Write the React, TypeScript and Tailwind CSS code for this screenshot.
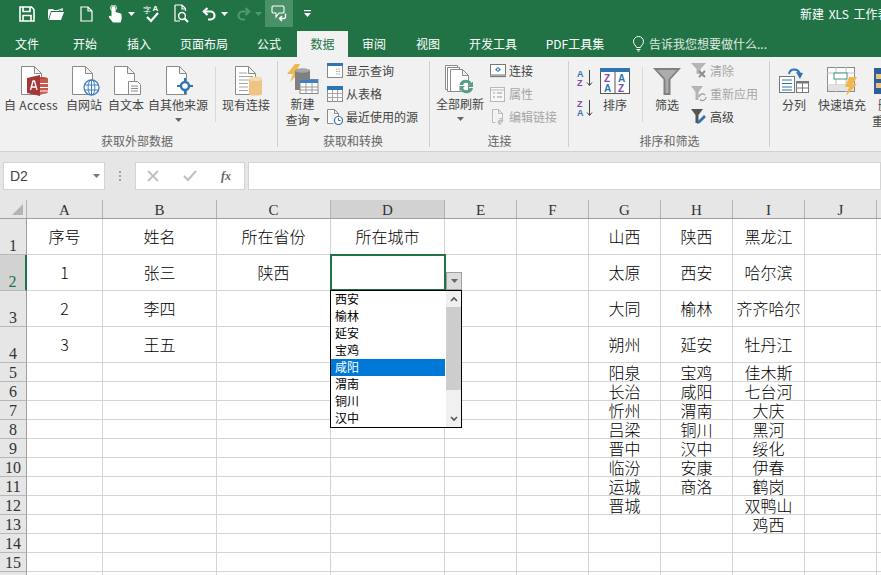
import React from "react";

const cols = ["A","B","C","D","E","F","G","H","I","J",""];
const rows: string[][] = [
  ["序号","姓名","所在省份","所在城市","","","山西","陕西","黑龙江","",""],
  ["1","张三","陕西","","","","太原","西安","哈尔滨","",""],
  ["2","李四","","","","","大同","榆林","齐齐哈尔","",""],
  ["3","王五","","","","","朔州","延安","牡丹江","",""],
  ["","","","","","","阳泉","宝鸡","佳木斯","",""],
  ["","","","","","","长治","咸阳","七台河","",""],
  ["","","","","","","忻州","渭南","大庆","",""],
  ["","","","","","","吕梁","铜川","黑河","",""],
  ["","","","","","","晋中","汉中","绥化","",""],
  ["","","","","","","临汾","安康","伊春","",""],
  ["","","","","","","运城","商洛","鹤岗","",""],
  ["","","","","","","晋城","","双鸭山","",""],
  ["","","","","","","","","鸡西","",""],
  ["","","","","","","","","","",""],
  ["","","","","","","","","","",""],
  ["","","","","","","","","","",""],
];
const colW = ["w-[76px]","w-[114px]","w-[114px]","w-[114px]","w-[72px]","w-[72px]","w-[72px]","w-[72px]","w-[72px]","w-[72px]","w-[5px]"];
const cities = ["西安","榆林","延安","宝鸡","咸阳","渭南","铜川","汉中"];

const Doc = () => (
  <path d="M.5 1.5h13l7 7v21H.5z M13.5 1.5v7h7" fill="#fff" stroke="#8a8a8a" strokeWidth="1" />
);

const QSave = () => (
  <svg width="16" height="16" viewBox="0 0 16 16" fill="none" stroke="#fff" strokeWidth="1.6"><path d="M1 1h11.5L15 3.5V15H1z"/><path d="M4 1v4.5h7V1" /><path d="M4 15V9.5h8V15" /></svg>
);
const QFolder = () => (
  <svg width="18" height="14" viewBox="0 0 18 14" fill="#fff"><path d="M1 13V3l1-1h4l1 1h5v1H4L1 13z"/><path d="M4.5 5H17l-3 8H2z" /><path d="M10 3l6-2v3z" opacity=".8"/></svg>
);
const QNew = () => (
  <svg width="13" height="16" viewBox="0 0 13 16" fill="none" stroke="#fff" strokeWidth="1.2"><path d="M1 1h7l4 4v10H1zM8 1v4h4" /></svg>
);
const QTouch = () => (
  <svg width="14" height="18" viewBox="0 0 14 18" fill="#fff"><path d="M3.5 3a2 2 0 0 1 4 0v4l4.5 1.3c1 .3 1.6 1 1.6 2V14l-1 3.5H5L1 12.5c-.6-.9.3-2.2 1.4-1.7l1.1.7z" /><circle cx="5.5" cy="3" r="3" fill="none" stroke="#fff" strokeWidth=".8"/></svg>
);
const Caret = ({ c = "#fff" }: { c?: string }) => (
  <svg width="7" height="4" viewBox="0 0 7 4" fill={c}><path d="M0 0h7L3.5 4z" /></svg>
);
const QSpell = () => (
  <svg width="18" height="19" viewBox="0 0 18 19" fill="none" stroke="#fff"><text x="0" y="9" fontSize="8" fill="#fff" stroke="none" fontFamily="Noto Sans CJK SC">字</text><text x="9.5" y="7" fontSize="8" fill="#fff" stroke="none" fontFamily="Liberation Sans" fontWeight="700">A</text><path d="M4 13l4 4 7-8" strokeWidth="2.2" /></svg>
);
const QPreview = () => (
  <svg width="15" height="19" viewBox="0 0 15 19" fill="none" stroke="#fff" strokeWidth="1.2"><path d="M1 1h7l3.5 3.5V7M1 1v16h5M8 1v4h3.5" /><circle cx="8" cy="12" r="3.4" strokeWidth="1.5"/><path d="M10.5 14.5L14 18" strokeWidth="2" /></svg>
);
const QUndo = ({ c = "#fff", flip = false }: { c?: string; flip?: boolean }) => (
  <svg width="15" height="14" viewBox="0 0 15 14" fill="none" stroke={c} strokeWidth="2.2" className={flip ? "-scale-x-100" : ""}><path d="M5.5 1L1.8 4.5 5.5 8" /><path d="M2 4.5h6.5a4 4 0 0 1 0 8H6" /></svg>
);
const QComment = () => (
  <svg width="16" height="17" viewBox="0 0 16 17" fill="none" stroke="#fff" strokeWidth="1.1"><path d="M2 1h10l1 1v5l-1 1H8L5 12V8H2L1 7V2z" /><path d="M14.5 8.5v3.5a1.5 1.5 0 0 1-1.5 1.5H8.5M11 11l-2.5 2.5L11 16" strokeWidth="1.4" /></svg>
);
const QMore = () => (
  <svg width="7" height="7" viewBox="0 0 7 7" fill="#fff"><path d="M0 0h7v1.2H0zM0 3h7L3.5 7z" /></svg>
);

const AccessIcon = () => (
  <svg width="32" height="32" viewBox="0 0 32 32" className="overflow-visible"><g transform="translate(6 0)"><Doc />
    <ellipse cx="21" cy="14" rx="6" ry="2" fill="#b7472a" /><path d="M15 14h12v13c0 1.2-2.5 2-6 2s-6-.8-6-2z" fill="#c75b4a" /><path d="M17 18.5h10M17 22.5h10M17 26h10" stroke="#fff" strokeWidth="1.2"/>
    <path d="M6 13l13-3v21L6 28z" fill="#a4373a" /><path d="M9.5 25l2.5-9h1.5l2.5 9M10.6 22h4.3" stroke="#fff" strokeWidth="1.3" fill="none" />
  </g></svg>
);
const WebIcon = () => (
  <svg width="32" height="32" viewBox="0 0 32 32" className="overflow-visible"><g transform="translate(4 0)"><Doc />
    <circle cx="19.5" cy="22.5" r="7.5" fill="#fff" stroke="#3f7fbf" strokeWidth="1.3"/><ellipse cx="19.5" cy="22.5" rx="3.4" ry="7.5" fill="none" stroke="#3f7fbf"/><path d="M19.5 15v15M12.5 20h14M12.5 25h14" stroke="#3f7fbf" fill="none"/>
  </g></svg>
);
const TextIcon = () => (
  <svg width="32" height="32" viewBox="0 0 32 32" className="overflow-visible"><g transform="translate(4 0)"><Doc />
    <path d="M14.5 16.5h9l3 3v10h-12z" fill="#fff" stroke="#8a8a8a"/><path d="M17 21h7M17 23.5h7M17 26h7" stroke="#8a8a8a" />
  </g></svg>
);
const OtherIcon = () => (
  <svg width="32" height="32" viewBox="0 0 32 32" className="overflow-visible"><g transform="translate(4 0)"><Doc />
    <circle cx="19" cy="21" r="4" fill="#fff" stroke="#2f75b5" strokeWidth="2.4"/><path d="M19 13v4M19 25v4M11 21h4M23 21h4" stroke="#2f75b5" strokeWidth="2"/>
  </g></svg>
);
const ExistingIcon = () => (
  <svg width="32" height="32" viewBox="0 0 32 32" className="overflow-visible"><g transform="translate(5 0)"><Doc />
    <path d="M4 8h8M4 11.5h14M4 15h14M4 18.5h9M4 22h9M4 25.5h9" stroke="#a6a6a6" />
    <path d="M14 14c0-3 13-3 13 0v15c0 2-13 2-13 0z" fill="#eec584" /><ellipse cx="20.5" cy="14" rx="6.5" ry="2" fill="#f5dcb0"/>
  </g></svg>
);
const QueryIcon = () => (
  <svg width="34" height="32" viewBox="0 0 34 32">
    <path d="M9 1h5L10 9h4L4 19l3-8H1z" fill="#f0b84b" />
    <path d="M9 8c0-3 15-3 15 0v19H9z" fill="#808080" /><ellipse cx="16.5" cy="7.5" rx="7.5" ry="2.2" fill="#a6a6a6"/>
    <rect x="14" y="16.5" width="18" height="14" fill="#fff" stroke="#8a8a8a"/><rect x="14" y="16.5" width="18" height="3.5" fill="#3f7fbf"/><path d="M14 24h18M14 27h18M20 20v10M26 20v10" stroke="#9a9a9a" />
  </svg>
);
const ShowQ = () => (
  <svg width="16" height="16" viewBox="0 0 16 16"><rect x=".5" y=".5" width="15" height="14" fill="#fff" stroke="#8a8a8a"/><rect width="16" height="3" fill="#2f75b5"/><path d="M9 6h5M9 8.5h5M9 11h5" stroke="#a6a6a6" strokeDasharray="1.5 1"/></svg>
);
const TableI = () => (
  <svg width="16" height="16" viewBox="0 0 16 16"><rect x=".5" y=".5" width="15" height="15" fill="#fff" stroke="#8a8a8a"/><rect width="16" height="4" fill="#2f75b5"/><path d="M0 7.5h16M0 11.5h16M5.5 4v12M10.5 4v12" stroke="#a6a6a6"/></svg>
);
const RecentI = () => (
  <svg width="16" height="16" viewBox="0 0 16 16"><path d="M.5.5h7l4 4v4M.5.5v14h6M7.5.5v4h4" fill="#fff" stroke="#8a8a8a"/><circle cx="11.5" cy="11.5" r="4" fill="#fff" stroke="#2f75b5" strokeWidth="1.2"/><path d="M11.5 9v2.5h2" stroke="#444" fill="none" strokeWidth=".8"/></svg>
);
const RefreshAll = () => (
  <svg width="32" height="32" viewBox="0 0 32 32">
    <path d="M1.5 1.5h12v24h-12z" fill="#fff" stroke="#8a8a8a"/><path d="M3.5 3.5h12v24h-12z" fill="#fff" stroke="#8a8a8a"/><path d="M6.5 5.5h12l6 6v16h-18zM18.5 5.5v6h6" fill="#fff" stroke="#8a8a8a"/>
    <path d="M15.5 21a6.5 6.5 0 0 1 12-2l1.5-1.5v5.5h-5.5l2-2a3.5 3.5 0 0 0-6.5 0z" fill="#57a085"/><path d="M29 24a6.5 6.5 0 0 1-12 2l-1.5 1.5V22h5.5l-2 2a3.5 3.5 0 0 0 6.5 0z" fill="#57a085"/>
  </svg>
);
const ConnI = () => (
  <svg width="16" height="16" viewBox="0 0 16 16"><rect x=".5" y="1.5" width="15" height="10.5" fill="#fff" stroke="#777"/><path d="M0 13.5h16" stroke="#777" strokeWidth="1.2"/><path d="M8 4l3 2.5L8 9 5 6.5z" fill="#2f75b5"/><circle cx="8" cy="6.5" r="1" fill="#fff"/></svg>
);
const PropI = () => (
  <svg width="16" height="16" viewBox="0 0 16 16" opacity=".55"><rect x=".5" y="1.5" width="14" height="14" fill="#fff" stroke="#8a8a8a"/><path d="M.5 4h14" stroke="#8a8a8a"/><path d="M3 7h2M3 11h2M7 7h5M7 11h5" stroke="#8a8a8a" strokeWidth="1.3"/></svg>
);
const EditLinkI = () => (
  <svg width="16" height="16" viewBox="0 0 16 16" opacity=".55"><path d="M2.5.5h6l4 4v5M2.5.5v13h3M8.5.5v4h4" fill="#fff" stroke="#8a8a8a"/><path d="M7 13h3a1.7 1.7 0 0 0 0-3.4H8.5M12 11.5H9a1.7 1.7 0 0 0 0 3.4h1.5" transform="translate(1 0)" fill="none" stroke="#8a8a8a" strokeWidth="1.2"/></svg>
);
const SortMini = ({ top, bot, tc, bc }: { top: string; bot: string; tc: string; bc: string }) => (
  <svg width="16" height="18" viewBox="0 0 16 18">
    <text x="0" y="8" fontSize="9" fontWeight="700" fontFamily="Liberation Sans" fill={tc}>{top}</text>
    <text x="0" y="17" fontSize="9" fontWeight="700" fontFamily="Liberation Sans" fill={bc}>{bot}</text>
    <path d="M12.5 1v15M10 13.5l2.5 3 2.5-3" stroke="#444" fill="none" />
  </svg>
);
const SortBig = () => (
  <svg width="30" height="26" viewBox="0 0 30 26">
    <rect x=".5" y=".5" width="29" height="25" fill="#fff" stroke="#555"/><rect width="30" height="4" fill="#2f75b5"/><path d="M15 4v21" stroke="#555"/>
    <text x="4" y="14" fontSize="10" fontWeight="700" fontFamily="Liberation Sans" fill="#7f4fa5">Z</text>
    <text x="4" y="24" fontSize="10" fontWeight="700" fontFamily="Liberation Sans" fill="#2f75b5">A</text>
    <text x="18" y="14" fontSize="10" fontWeight="700" fontFamily="Liberation Sans" fill="#2f75b5">A</text>
    <text x="18" y="24" fontSize="10" fontWeight="700" fontFamily="Liberation Sans" fill="#7f4fa5">Z</text>
  </svg>
);
const Funnel = () => (
  <svg width="28" height="27" viewBox="0 0 28 27"><path d="M0 0h28L17.5 11.5V27h-7V11.5z" fill="#808080"/><path d="M4 2h20L15.5 11v14h-3V11z" fill="#c9c9c9" opacity=".6"/></svg>
);
const ClearI = () => (
  <svg width="16" height="16" viewBox="0 0 16 16"><path d="M0 0h15L9.5 6v5h-4V6z" fill="#b5b5b5"/><path d="M8 8l6 6M14 8l-6 6" stroke="#8a8a8a" strokeWidth="1.8"/></svg>
);
const ReapplyI = () => (
  <svg width="16" height="16" viewBox="0 0 16 16"><path d="M0 0h12L7.5 6v8h-3V6z" fill="#b5b5b5"/><path d="M8 11a3.5 3.5 0 0 1 6-2M15 11a3.5 3.5 0 0 1-6 2.5" stroke="#9a9a9a" fill="none" strokeWidth="1.2"/></svg>
);
const AdvI = () => (
  <svg width="16" height="16" viewBox="0 0 16 16"><path d="M0 0h12L7.5 6v8h-3V6z" fill="#555"/><path d="M6 15l1-3 6-6 2 2-6 6z" fill="#2f75b5"/></svg>
);
const SplitI = () => (
  <svg width="30" height="26" viewBox="0 0 30 26">
    <path d="M10 6c1-6 9-6 11 0" stroke="#2f75b5" strokeWidth="2" fill="none"/><path d="M17 4l7 1-3 6z" fill="#2f75b5"/>
    <rect x=".5" y="8.5" width="15" height="16" fill="#fff" stroke="#777"/><path d="M3 12h10M3 15.5h10M3 19h10M3 22h10" stroke="#2f75b5" strokeWidth="1.2"/>
    <rect x="17.5" y="13.5" width="12" height="11" fill="#fff" stroke="#777"/><rect x="17.5" y="13.5" width="12" height="2" fill="#777"/><path d="M23.5 15v9M18 20h11" stroke="#777"/>
  </svg>
);
const FlashI = () => (
  <svg width="31" height="29" viewBox="0 0 31 29">
    <rect x=".5" y=".5" width="27" height="24" fill="#fff" stroke="#8a8a8a"/><path d="M0 6h28M0 18h28M9 0v25M19 0v25" stroke="#bfbfbf"/><rect x="7" y="6" width="13" height="6" fill="#fff" stroke="#3f9a7a"/><rect x="1" y="18" width="26" height="6" fill="#e3e3e3"/>
    <path d="M22 10h8l-4 7h4L19 29l3-9h-4z" fill="#f0b84b"/>
  </svg>
);
const DupI = () => (
  <svg width="16" height="26" viewBox="0 0 16 26"><rect width="16" height="26" fill="#2f5f9a"/><rect x="2" y="6" width="14" height="5" fill="#edc27a"/><rect x="2" y="15" width="14" height="5" fill="#edc27a"/></svg>
);

const Small = ({ icon, label, off = false }: { icon: React.ReactNode; label: string; off?: boolean }) => (
  <div className="flex items-center gap-[3px] h-[23px]">
    <span className="w-[16px] h-[16px] flex items-center justify-center shrink-0">{icon}</span>
    <span className={`text-[12px] leading-none whitespace-nowrap ${off ? "text-[#a6a6a6]" : "text-[#444444]"}`}>{label}</span>
  </div>
);
const Large = ({ icon, label, w, caret = false, pt = "pt-[8px]" }: { icon: React.ReactNode; label: React.ReactNode; w: string; caret?: boolean; pt?: string }) => (
  <div className={`${w} ${pt} flex flex-col items-center shrink-0`}>
    <div className="h-[32px] flex items-center justify-center">{icon}</div>
    <div className="text-[12px] leading-[16px] text-[#444444] text-center whitespace-nowrap">{label}</div>
    {caret && <div className="mt-[5px]"><Caret c="#666666" /></div>}
  </div>
);
const Group = ({ w, label, labelCls = "", children }: { w: string; label: string; labelCls?: string; children: React.ReactNode }) => (
  <div className={`${w} h-[94px] flex flex-col shrink-0 relative`}>
    <div className="h-[76px] flex">{children}</div>
    <div className={`text-center text-[12px] leading-[16px] text-[#666666] ${labelCls}`}>{label}</div>
    <div className="absolute right-0 top-[4px] bottom-[4px] w-[1px] bg-[#cfcfcf]" />
  </div>
);
const Sep = ({ className }: { className: string }) => <div className={`w-[1px] h-[55px] mt-[10px] bg-[#d8d8d8] shrink-0 ${className}`} />;

const Tab = ({ w, label, active = false }: { w: string; label: string; active?: boolean }) => (
  <div className={`${w} h-[26px] flex items-center justify-center text-[12px] shrink-0 ${active ? "bg-[#f1f1f1] text-[#217346]" : "text-white"}`}>{label}</div>
);

export default function App() {
  return (
    <div className="w-[881px] h-[575px] overflow-hidden relative bg-white font-['Noto_Sans_CJK_SC',sans-serif]">
      {/* title + QAT */}
      <div className="h-[31px] bg-[#217346] flex items-start relative">
        <div className="h-[27px] flex items-center pl-[19px]">
          <span className="w-[16px] flex justify-center"><QSave /></span>
          <span className="ml-[12px]"><QFolder /></span>
          <span className="ml-[15px]"><QNew /></span>
          <span className="ml-[15px]"><QTouch /></span>
          <span className="ml-[6px] flex"><Caret /></span>
          <span className="ml-[8px]"><QSpell /></span>
          <span className="ml-[13px]"><QPreview /></span>
          <span className="ml-[13px]"><QUndo /></span>
          <span className="ml-[4px] flex"><Caret /></span>
          <span className="ml-[8px]"><QUndo c="#4d9a72" flip /></span>
          <span className="ml-[4px] flex"><Caret c="#4d9a72" /></span>
          <span className="ml-[3px] w-[28px] h-[27px] bg-[#4a9068] flex items-center justify-center"><QComment /></span>
          <span className="ml-[11px] flex"><QMore /></span>
        </div>
        <div className="ml-auto h-[27px] w-[81px] overflow-hidden flex items-center text-[12px] text-white whitespace-pre [word-spacing:2px]">新建 XLS 工作表 - Excel</div>
      </div>
      {/* tabs */}
      <div className="h-[26px] bg-[#217346] flex">
        <Tab w="w-[54px]" label="文件" />
        <Tab w="w-[52px] ml-[5px]" label="开始" />
        <Tab w="w-[56px]" label="插入" />
        <Tab w="w-[74px]" label="页面布局" />
        <Tab w="w-[56px]" label="公式" />
        <Tab w="w-[51px]" label="数据" active />
        <Tab w="w-[52px]" label="审阅" />
        <Tab w="w-[56px]" label="视图" />
        <Tab w="w-[74px]" label="开发工具" />
        <Tab w="w-[90px]" label="PDF工具集" />
        <div className="ml-[12px] flex items-center gap-[4px] text-[12px] text-white/85 whitespace-nowrap">
          <svg width="13" height="16" viewBox="0 0 13 16" fill="none" stroke="#fff" strokeWidth="1"><path d="M4.5 11.5C4 9.5 1.5 8.5 1.5 5.5a5 5 0 0 1 10 0c0 3-2.5 4-3 6z M4.5 13.5h4M5.5 15h2" /></svg>
          <span>告诉我您想要做什么...</span>
        </div>
      </div>
      {/* ribbon */}
      <div className="h-[95px] bg-[#f1f1f1] border-b border-[#d2d2d2] flex overflow-hidden">
        <Group w="w-[278px]" label="获取外部数据" labelCls="pr-[4px]">
          <Large w="w-[62px]" icon={<AccessIcon />} label={<span className="tracking-[0.3px]">自 Access</span>} />
          <Large w="w-[44px]" icon={<WebIcon />} label="自网站" />
          <Large w="w-[40px]" icon={<TextIcon />} label="自文本" />
          <Large w="w-[64px]" icon={<OtherIcon />} label="自其他来源" caret />
          <Sep className="ml-[5px]" />
          <Large w="w-[60px]" icon={<ExistingIcon />} label="现有连接" />
        </Group>
        <Group w="w-[152px]" label="获取和转换" labelCls="pr-[2px]">
          <Large w="w-[49px]" icon={<QueryIcon />} pt="pt-[6px]" label={<><div className="mt-[1px]">新建</div><div className="flex items-center gap-[3px]">查询<Caret c="#666666" /></div></>} />
          <div className="pt-[2px] flex flex-col">
            <Small icon={<ShowQ />} label="显示查询" />
            <Small icon={<TableI />} label="从表格" />
            <Small icon={<RecentI />} label="最近使用的源" />
          </div>
        </Group>
        <Group w="w-[139px]" label="连接">
          <Large w="w-[60px]" icon={<RefreshAll />} label="全部刷新" caret pt="pt-[7px]" />
          <div className="pt-[2px] flex flex-col">
            <Small icon={<ConnI />} label="连接" />
            <Small icon={<PropI />} label="属性" off />
            <Small icon={<EditLinkI />} label="编辑链接" off />
          </div>
        </Group>
        <Group w="w-[201px]" label="排序和筛选">
          <div className="w-[31px] pl-[8px] pt-[12px] flex flex-col gap-[12px] shrink-0">
            <SortMini top="A" bot="Z" tc="#2f75b5" bc="#7f4fa5" />
            <SortMini top="Z" bot="A" tc="#7f4fa5" bc="#2f75b5" />
          </div>
          <Large w="w-[30px]" icon={<SortBig />} label="排序" />
          <Sep className="ml-[12px]" />
          <Large w="w-[48px]" icon={<Funnel />} label="筛选" />
          <div className="pt-[2px] flex flex-col">
            <Small icon={<ClearI />} label="清除" off />
            <Small icon={<ReapplyI />} label="重新应用" off />
            <Small icon={<AdvI />} label="高级" />
          </div>
        </Group>
        <div className="w-[111px] flex shrink-0">
          <Large w="w-[48px]" icon={<SplitI />} label="分列" />
          <Large w="w-[48px]" icon={<FlashI />} label="快速填充" />
          <div className="ml-[6px] pt-[8px] shrink-0 w-[36px]">
            <div className="h-[32px] pl-[2px] flex items-center"><DupI /></div>
            <div className="text-[12px] leading-[16px] text-[#444444] text-center whitespace-nowrap">删除<br />重复项</div>
          </div>
        </div>
      </div>
      {/* formula bar */}
      <div className="h-[48px] bg-[#e6e6e6] pt-[10px] pl-[3px] flex items-start">
        <div className="w-[102px] h-[28px] bg-white border border-[#d4d4d4] flex items-center justify-between pl-[6px] pr-[4px] text-[14px] text-[#444444] font-['Liberation_Sans',sans-serif]">
          <span>D2</span><Caret c="#777777" />
        </div>
        <div className="w-[30px] h-[28px] flex flex-col items-center justify-center gap-[2px]">
          <span className="w-[2px] h-[2px] bg-[#a0a0a0]" /><span className="w-[2px] h-[2px] bg-[#a0a0a0]" /><span className="w-[2px] h-[2px] bg-[#a0a0a0]" />
        </div>
        <div className="w-[110px] h-[28px] bg-white border border-[#d4d4d4] flex items-center pl-[11px] shrink-0">
          <svg width="12" height="12" viewBox="0 0 12 12" stroke="#bfbfbf" strokeWidth="1.8"><path d="M1 1l10 10M11 1L1 11" /></svg>
          <svg className="ml-[24px]" width="14" height="12" viewBox="0 0 14 12" fill="none" stroke="#bfbfbf" strokeWidth="2"><path d="M1 6l4 4 8-9" /></svg>
          <span className="ml-[24px] text-[12px] italic font-bold text-[#666666] font-['Liberation_Serif',serif]">fx</span>
        </div>
        <div className="ml-[3px] flex-1 h-[28px] bg-white border border-[#d4d4d4]" />
      </div>
      {/* sheet */}
      <div className="relative">
        <div className="flex h-[19px] bg-[#e6e6e6] border-b border-[#9f9f9f]">
          <div className="w-[27px] h-[18px] border-r border-[#b4b4b4] flex items-end justify-end pr-[3px] pb-[3px] shrink-0">
            <svg width="11" height="11" viewBox="0 0 11 11" fill="#b4b4b4"><path d="M11 0v11H0z" /></svg>
          </div>
          {cols.map((c, i) => (
            <div key={i} className={`${colW[i]} h-[18px] shrink-0 border-r border-[#b4b4b4] flex items-end justify-center text-[15px] leading-[16px] text-[#333333] font-['Liberation_Serif',serif] ${c === "D" ? "bg-[#d2d2d2]" : ""}`}>{c}</div>
          ))}
        </div>
        {rows.map((r, ri) => (
          <div key={ri} className={`flex ${ri < 4 ? "h-[36px]" : "h-[19px]"}`}>
            <div className={`w-[27px] shrink-0 flex items-end justify-center text-[16px] leading-[16px] font-['Liberation_Serif',serif] border-b border-[#b8b8b8] ${ri === 1 ? "bg-[#d2d2d2] text-[#217346] border-r-2 border-r-[#217346]" : "bg-[#e6e6e6] text-[#333333] border-r border-r-[#9f9f9f]"}`}>{ri + 1}</div>
            {r.map((t, ci) => (
              <div key={ci} className={`${colW[ci]} shrink-0 border-r border-b border-[#d4d4d4] flex items-center justify-center text-[16px] leading-none font-light text-black whitespace-nowrap ${ri < 4 ? "pb-[2px]" : ""}`}>{t}</div>
            ))}
          </div>
        ))}
        {/* selected cell */}
        <div className="absolute left-[330px] top-[54px] w-[116px] h-[37px] border-2 border-[#217346]" />
        {/* dropdown button */}
        <div className="absolute left-[446px] top-[72px] w-[16px] h-[18px] bg-[#dcdcdc] border border-[#a0a0a0] flex items-center justify-center">
          <Caret c="#666666" />
        </div>
        {/* list */}
        <div className="absolute left-[330px] top-[90px] w-[132px] h-[138px] bg-white border border-black flex">
          <div className="w-[114px] flex flex-col">
            {cities.map((c) => (
              <div key={c} className={`h-[17px] pl-[4px] pb-[2px] flex items-center text-[12px] leading-none ${c === "咸阳" ? "bg-[#0078d7] text-white" : "text-black"}`}>{c}</div>
            ))}
          </div>
          <div className="w-[15px] ml-[1px] bg-[#f0f0f0] flex flex-col">
            <div className="h-[16px] flex items-center justify-center">
              <svg width="8" height="6" viewBox="0 0 8 6" fill="none" stroke="#555555" strokeWidth="1.6"><path d="M1 5l3-3 3 3" /></svg>
            </div>
            <div className="h-[83px] bg-[#cdcdcd]" />
            <div className="flex-1 flex items-end justify-center pb-[5px]">
              <svg width="8" height="6" viewBox="0 0 8 6" fill="none" stroke="#555555" strokeWidth="1.6"><path d="M1 1l3 3 3-3" /></svg>
            </div>
          </div>
        </div>
      </div>
    </div>
  );
}
